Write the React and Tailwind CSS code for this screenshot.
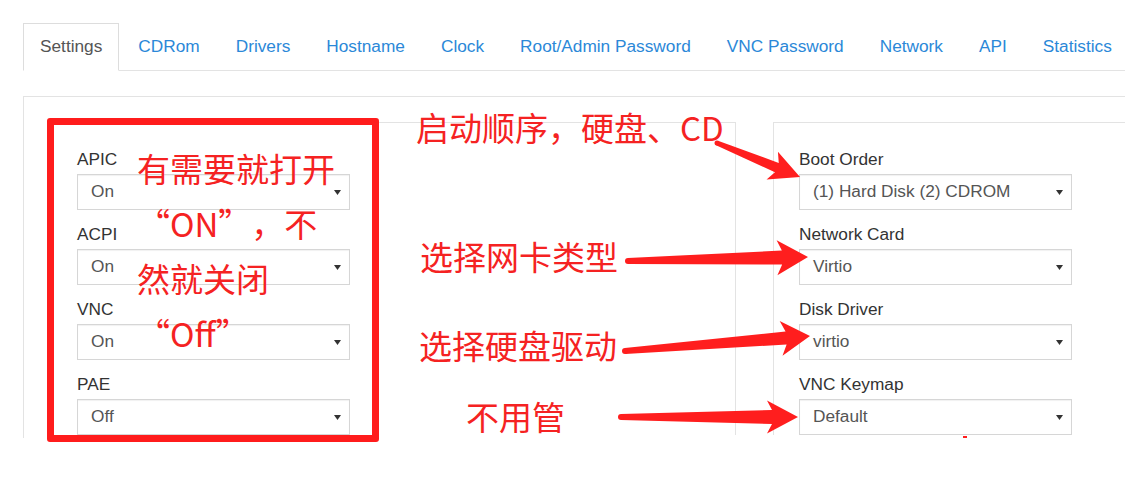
import React from 'react';

const tabs = ['Settings', 'CDRom', 'Drivers', 'Hostname', 'Clock', 'Root/Admin Password', 'VNC Password', 'Network', 'API', 'Statistics'];

const leftFields = [
  { label: 'APIC', value: 'On' },
  { label: 'ACPI', value: 'On' },
  { label: 'VNC', value: 'On' },
  { label: 'PAE', value: 'Off' },
];

const rightFields = [
  { label: 'Boot Order', value: '(1) Hard Disk (2) CDROM' },
  { label: 'Network Card', value: 'Virtio' },
  { label: 'Disk Driver', value: 'virtio' },
  { label: 'VNC Keymap', value: 'Default' },
];

// red arrows drawn over the screenshot: start, tip, start half-width, shaft half-width, head length, head half-width
const arrows = [
  { s: [717, 143], t: [800, 177], w0: 2.5, w1: 5, L: 25, H: 15 },
  { s: [628, 261], t: [808, 257], w0: 3, w1: 7, L: 26, H: 17.5 },
  { s: [625, 351], t: [810, 336], w0: 3, w1: 6.5, L: 24, H: 17.5 },
  { s: [621, 417], t: [798, 417], w0: 3, w1: 7, L: 26, H: 16.5 },
];

const arrowPoints = ({ s, t, w0, w1, L, H }) => {
  const dx = t[0] - s[0];
  const dy = t[1] - s[1];
  const len = Math.hypot(dx, dy);
  const ux = dx / len, uy = dy / len;
  const nx = -uy, ny = ux;
  const b = [t[0] - ux * L, t[1] - uy * L];
  const bb = [b[0] - ux * 5, b[1] - uy * 5];
  const pts = [
    [s[0] + nx * w0, s[1] + ny * w0],
    [b[0] + nx * w1, b[1] + ny * w1],
    [bb[0] + nx * H, bb[1] + ny * H],
    t,
    [bb[0] - nx * H, bb[1] - ny * H],
    [b[0] - nx * w1, b[1] - ny * w1],
    [s[0] - nx * w0, s[1] - ny * w0],
  ];
  return pts.map(p => p.join(',')).join(' ');
};

const Select = ({ value }) => (
  <div className="flex h-[36px] w-[273px] items-center justify-between border border-[#d6d6d6] pl-[13px] pr-[8px] text-[17.25px] text-[#555] shadow-[inset_0_1px_1px_rgba(0,0,0,0.06)]">
    <span>{value}</span>
    <svg width="7" height="5" viewBox="0 0 7 5">
      <path d="M0 0h7L3.5 5z" fill="#333" />
    </svg>
  </div>
);

const Panel = ({ fields, className }) => (
  <div className={`flex shrink-0 w-[686px] flex-col gap-[14px] border-t border-l border-[#e3e3e3] pt-[26px] ${className}`}>
    {fields.map((f) => (
      <div key={f.label} className="flex flex-col gap-[5px]">
        <div className="text-[17.25px] leading-[20px] text-[#333]">{f.label}</div>
        <Select value={f.value} />
      </div>
    ))}
  </div>
);

// full-width curly quote, glyph pushed to the inner side like the original annotation font
const Q = ({ children, side }) => (
  <span className={`inline-block w-[33px] ${side === 'open' ? 'text-right' : 'text-left'}`}>{children}</span>
);

const App = () => {
  return (
    <div className="relative h-[482px] w-[1148px] overflow-hidden bg-white font-['Liberation_Sans',Arial,sans-serif]">
      <div className="ml-[23px] w-[1102px] pt-[23px]">
        <ul className="flex border-b border-[#e3e3e3]">
          {tabs.map((tab, i) => (
            <li
              key={tab}
              className={`-mb-px mr-[2px] shrink-0 whitespace-nowrap border px-[16px] pt-[11px] pb-[13px] text-[17.25px] leading-[22px] ${
                i === 0 ? 'border-[#dddddd] border-b-white bg-white text-[#555]' : 'border-transparent text-[#2b88d8]'
              }`}
            >
              {tab}
            </li>
          ))}
        </ul>

        <div className="mt-[25px] h-[342px] overflow-hidden border-l border-t border-[#e3e3e3] pl-[26px] pt-[25px]">
          <div className="flex gap-[37px]">
            <Panel fields={leftFields} className="border-r pl-[26px]" />
            <Panel fields={rightFields} className="pl-[25px]" />
          </div>
        </div>
      </div>

      {/* annotations */}
      <div className="absolute left-[47px] top-[118px] h-[324px] w-[332px] rounded-[3px] border-[7px] border-[#ff1c1c]" />

      <div className="pointer-events-none absolute inset-0 font-['Noto_Sans_CJK_SC',sans-serif] text-[33px] text-[#f52222]">
        <div className="absolute left-[137px] top-[141px] whitespace-nowrap leading-[55px]">
          <div>有需要就打开</div>
          <div>
            <Q side="open">“</Q>ON<Q side="close">”</Q>，不
          </div>
          <div>然就关闭</div>
          <div>
            <Q side="open">“</Q>Off<Q side="close">”</Q>
          </div>
        </div>

        <div className="absolute left-[416px] top-[111px] whitespace-nowrap leading-none">启动顺序，硬盘、CD</div>
        <div className="absolute left-[420px] top-[240px] leading-none">选择网卡类型</div>
        <div className="absolute left-[419px] top-[329px] leading-none">选择硬盘驱动</div>
        <div className="absolute left-[466px] top-[400px] leading-none">不用管</div>
      </div>

      <svg className="pointer-events-none absolute left-0 top-0" width="1148" height="482">
        {arrows.map((a, i) => (
          <g key={i} fill="#ff1e1e">
            <polygon points={arrowPoints(a)} />
            <circle cx={a.s[0]} cy={a.s[1]} r={a.w0} />
          </g>
        ))}
        <rect x="963" y="436" width="4" height="2" fill="#ff1e1e" />
      </svg>
    </div>
  );
};

export default App;
